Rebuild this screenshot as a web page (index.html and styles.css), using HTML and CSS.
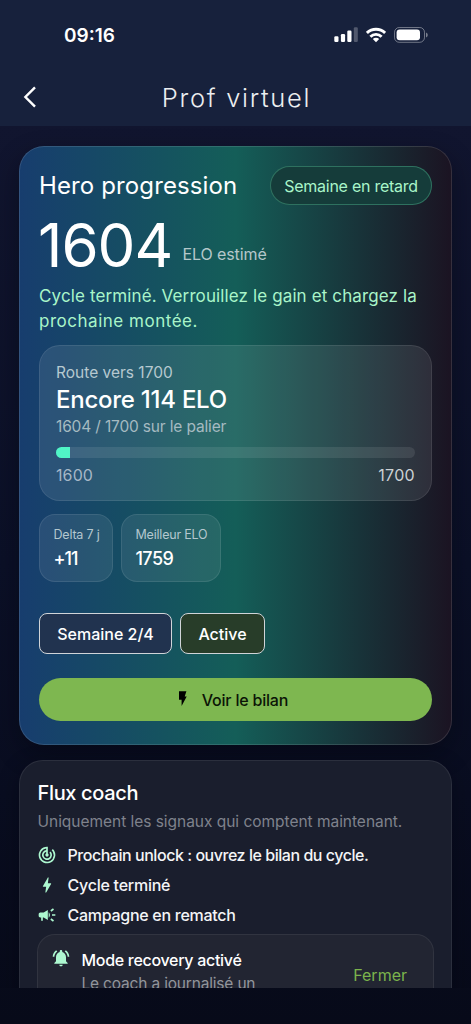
FILE: index.html
```html
<!DOCTYPE html>
<html lang="fr">
<head>
<meta charset="utf-8">
<title>Prof virtuel</title>
<link rel="stylesheet" href="styles.css">
</head>
<body>
<header class="header">
  <div class="status">
    <span class="time">09:16</span>
    <div class="indicators">
      <svg class="signal" viewBox="0 0 24 16" width="24" height="16"><g fill="#fff"><rect x="0.3" y="9.3" width="4.2" height="5.6" rx="1.2"/><rect x="6.9" y="7" width="4.2" height="7.9" rx="1.2"/><rect x="13.3" y="3.6" width="4.2" height="11.3" rx="1.2"/><rect x="19.8" y="0.3" width="4" height="14.6" rx="1.2" opacity=".25"/></g></svg>
      <svg class="wifi" viewBox="0 0 20 16" width="20" height="16"><g fill="none" stroke="#fff" stroke-width="2.9"><path d="M0.9 5.9a13.1 13.1 0 0 1 18.2 0"/><path d="M4.4 9.7a8 8 0 0 1 11.2 0"/></g><path d="M10 15.2L6.8 12a4.5 4.5 0 0 1 6.4 0z" fill="#fff"/></svg>
      <svg class="battery" viewBox="0 0 34 16" width="34" height="16"><rect x=".5" y=".5" width="30" height="14.8" rx="4.8" fill="none" stroke="#fff" stroke-opacity=".38"/><rect x="2.6" y="2.6" width="23.4" height="10.6" rx="3" fill="#fff"/><path d="M32 5.4q1.8.6 1.8 2.5T32 10.4z" fill="#fff" opacity=".42"/></svg>
    </div>
  </div>
  <nav class="nav">
    <svg class="back" viewBox="0 0 14 22" width="14" height="22"><path d="M12 1.4L2.4 11l9.6 9.6" fill="none" stroke="#fff" stroke-width="2.4"/></svg>
    <h1 class="nav-title">Prof virtuel</h1>
  </nav>
</header>

<main class="content">
  <section class="hero">
    <div class="hero-head">
      <h2 class="hero-title">Hero progression</h2>
      <span class="pill">Semaine en retard</span>
    </div>
    <div class="score">
      <strong class="score-value">1604</strong>
      <span class="score-label">ELO estimé</span>
    </div>
    <p class="hero-text">Cycle terminé. Verrouillez le gain et chargez la <span class="second-line">prochaine montée.</span></p>

    <div class="route">
      <div class="route-label">Route vers 1700</div>
      <div class="route-title">Encore 114 ELO</div>
      <div class="route-sub">1604 / 1700 sur le palier</div>
      <div class="bar"><div class="bar-fill"></div></div>
      <div class="bounds"><span class="bound-low">1600</span><span class="bound-high">1700</span></div>
    </div>

    <div class="tiles">
      <div class="tile delta"><span class="tile-label">Delta 7 j</span><span class="tile-value plus">+11</span></div>
      <div class="tile best"><span class="tile-label">Meilleur ELO</span><span class="tile-value">1759</span></div>
    </div>

    <div class="chips">
      <span class="chip week">Semaine 2/4</span>
      <span class="chip active">Active</span>
    </div>

    <button class="cta">
      <svg viewBox="0 0 10 18" width="10" height="18"><path d="M1 1.3h7.4L6.7 6.4h2L3.6 16V9.8H1z" fill="#000"/></svg>
      <span>Voir le bilan</span>
    </button>
  </section>

  <section class="flux">
    <h2 class="flux-title">Flux coach</h2>
    <p class="flux-sub">Uniquement les signaux qui comptent maintenant.</p>
    <ul class="signals">
      <li class="signal-row unlock">
        <svg viewBox="0 0 24 24" width="20" height="20"><path fill="currentColor" d="M19.07 4.93l-1.41 1.41A8 8 0 1 1 11 4.07v2.02A6 6 0 1 0 16.24 7.76l-1.41 1.41A4 4 0 1 1 11 8.14v2.14A2 2 0 1 0 14 12c0-.74-.4-1.38-1-1.72V2h-1a10 10 0 1 0 7.07 2.93z"/></svg>
        <span>Prochain unlock : ouvrez le bilan du cycle.</span>
      </li>
      <li class="signal-row cycle">
        <svg viewBox="0 0 24 24" width="20" height="20"><path fill="currentColor" d="M11 21h-1l1-7H7.5c-.88 0-.33-.75-.31-.78C8.48 10.94 10.42 7.54 13.01 3h1l-1 7h3.51c.4 0 .62.19.4.66C12.97 17.55 11 21 11 21z"/></svg>
        <span>Cycle terminé</span>
      </li>
      <li class="signal-row campaign">
        <svg viewBox="0 0 24 24" width="20" height="20"><path fill="currentColor" d="M18 11v2h4v-2h-4zM16 17.61c.96.71 2.21 1.65 3.2 2.39.4-.53.8-1.07 1.2-1.6-.99-.74-2.24-1.68-3.2-2.4-.4.54-.8 1.08-1.2 1.61zM20.4 5.6c-.4-.53-.8-1.07-1.2-1.6-.99.74-2.24 1.68-3.2 2.4.4.53.8 1.07 1.2 1.6.96-.72 2.21-1.65 3.2-2.4zM4 9c-1.1 0-2 .9-2 2v2c0 1.1.9 2 2 2h1v4h2v-4h1l5 3V6L8 9H4zM15.5 12c0-1.33-.58-2.53-1.5-3.35v6.69c.92-.81 1.5-2.01 1.5-3.34z"/></svg>
        <span>Campagne en rematch</span>
      </li>
    </ul>
    <div class="notice">
      <svg class="bell" viewBox="0 0 24 24" width="20" height="20"><path fill="currentColor" d="M7.58 4.08L6.15 2.65C3.75 4.48 2.17 7.3 2.03 10.5h2c.15-2.65 1.51-4.97 3.55-6.42zm12.39 6.42h2c-.15-3.2-1.73-6.02-4.12-7.85l-1.42 1.43c2.02 1.45 3.39 3.77 3.54 6.42zM18 11c0-3.07-1.64-5.64-4.5-6.32V4c0-.83-.67-1.5-1.5-1.5s-1.5.67-1.5 1.5v.68C7.63 5.36 6 7.92 6 11v5l-2 2v1h16v-1l-2-2v-5zm-6 11c1.1 0 2-.9 2-2h-4c0 1.1.9 2 2 2z"/></svg>
      <div class="notice-body">
        <div class="notice-title">Mode recovery activé</div>
        <div class="notice-text">Le coach a journalisé un</div>
      </div>
      <span class="close">Fermer</span>
    </div>
  </section>
</main>
</body>
</html>
```
FILE: styles.css
```css
* { box-sizing: border-box; }

body {
  margin: 0;
  height: 1024px;
  overflow: hidden;
  background: linear-gradient(180deg, #11152f 0%, #11152f 12%, #0b1027 55%, #070a19 100%);
  color: #fff;
  font-family: Inter, "Liberation Sans", sans-serif;
  font-size: 16px;
}

h1, h2, p, ul { margin: 0; padding: 0; font-weight: 400; }
ul { list-style: none; }
svg { display: block; flex: none; }
span, div, h1, h2 { white-space: nowrap; }

.header { height: 126px; background: #17213c; }

.status {
  height: 70px;
  padding: 0 43px 0 64px;
  display: flex;
  align-items: center;
  justify-content: space-between;
}
.time { font-size: 19px; font-weight: 600; }
.indicators { display: flex; align-items: center; }
.wifi { margin: 0 8px 0 8px; }

.nav {
  height: 54px;
  display: grid;
  grid-template-columns: 60px 1fr 60px;
  align-items: center;
}
.back { margin-left: 23px; }
.nav-title {
  padding-left: 2px;
  text-align: center;
  font-size: 25.5px;
  font-weight: 350;
  letter-spacing: 1.7px;
  color: #eceef0;
}

.content {
  height: 861.5px;
  overflow: hidden;
  padding: 20px 19px 0;
}

.hero {
  height: 599px;
  padding: 19px;
  border: 1px solid rgba(255, 255, 255, .12);
  border-radius: 25px;
  background: linear-gradient(90deg, #173d6e 0%, #145e58 50%, #1b1322 100%) border-box;
  box-shadow: 0 10px 24px rgba(5, 6, 16, .45);
}
.hero-head {
  height: 39px;
  display: flex;
  align-items: center;
  justify-content: space-between;
}
.hero-title { font-size: 24px; letter-spacing: .12px; }
.pill {
  width: 162px;
  height: 39px;
  line-height: 39px;
  border: 1px solid rgba(98, 218, 168, .34);
  border-radius: 20px;
  background: #153c3a;
  color: #a9f5c9;
  text-align: center;
  letter-spacing: -.26px;
}

.score { height: 79px; display: flex; align-items: flex-end; }
.score-value {
  width: 144.5px;
  margin-left: -1px;
  line-height: 78px;
  font-size: 60px;
  font-weight: 420;
  letter-spacing: -1px;
}
.score-label { margin-bottom: 20px; line-height: 20px; color: #b4c7ca; letter-spacing: -.1px; }

.hero-text {
  font-size: 17px;
  line-height: 24.5px;
  letter-spacing: .12px;
  color: #a9f5c9;
}
.second-line { display: block; letter-spacing: .52px; }

.route {
  height: 156px;
  margin-top: 12px;
  padding: 15.5px 16px;
  border: 1px solid rgba(255, 255, 255, .09);
  border-radius: 21px;
  background: rgba(255, 255, 255, .09);
}
.route-label { font-size: 15.5px; line-height: 22px; color: #b6c9d0; }
.route-title {
  font-size: 24px;
  font-weight: 450;
  line-height: 32px;
  letter-spacing: -.25px;
}
.route-sub { font-size: 15.5px; line-height: 22px; letter-spacing: -.16px; color: #a5bac1; }
.bar {
  height: 11px;
  margin-top: 9px;
  overflow: hidden;
  border-radius: 6px;
  background: rgba(255, 255, 255, .09);
}
.bar-fill { width: 14px; height: 11px; background: #50f5c6; }
.bounds {
  margin-top: 6.5px;
  line-height: 22px;
  display: flex;
  justify-content: space-between;
}
.bound-low { color: #a6b7c7; letter-spacing: .1px; }
.bound-high { color: #ccd1d4; letter-spacing: .3px; }

.tiles { margin-top: 13px; display: flex; gap: 8px; }
.tile {
  height: 68px;
  padding: 11.5px 13.5px;
  border: 1px solid rgba(255, 255, 255, .09);
  border-radius: 16px;
  background: rgba(255, 255, 255, .08);
  display: flex;
  flex-direction: column;
  gap: 4px;
}
.delta { width: 74px; }
.best { width: 100px; }
.tile-label { font-size: 12.5px; line-height: 16px; letter-spacing: -.2px; color: #b4c7cf; }
.tile-value { font-size: 18px; font-weight: 450; line-height: 24px; letter-spacing: -.6px; }
.plus { letter-spacing: -1px; }

.chips { margin-top: 30.5px; display: flex; gap: 8px; }
.chip {
  height: 41.5px;
  line-height: 40.5px;
  border: 1px solid #d0d4d8;
  border-radius: 8px;
  text-align: center;
  font-weight: 450;
}
.week { width: 133px; background: #21334f; }
.active { width: 85px; background: #283d29; }

.cta {
  width: 100%;
  height: 43px;
  margin-top: 24px;
  padding: 0 5px 0 0;
  border: 0;
  border-radius: 22px;
  background: #7eb750;
  color: #0b1406;
  display: flex;
  align-items: center;
  justify-content: center;
  gap: 14px;
  font: 450 16px/44px Inter, sans-serif;
  letter-spacing: -.2px;
}
.cta svg { margin-bottom: 2px; }

.flux {
  height: 300px;
  margin-top: 15px;
  padding: 18px 17.5px 0;
  border: 1px solid rgba(255, 255, 255, .08);
  border-radius: 24px;
  background: #1a1e2d;
  box-shadow: 0 6px 20px rgba(5, 6, 16, .4);
}
.flux-title { font-size: 20px; font-weight: 450; line-height: 28px; letter-spacing: -.35px; }
.flux-sub {
  margin-top: 3.5px;
  font-size: 15.5px;
  line-height: 22px;
  letter-spacing: -.03px;
  white-space: nowrap;
  color: #7f828c;
}
.signals { margin-top: 7.5px; }
.signal-row {
  height: 30px;
  display: flex;
  align-items: center;
  gap: 10.5px;
  font-weight: 450;
  color: #f4f5f7;
}
.signal-row svg, .bell { color: #adf8d0; }
.signal-row svg { margin-left: -.5px; }
.unlock { letter-spacing: -.46px; }
.cycle { letter-spacing: -.25px; }
.campaign { letter-spacing: -.28px; }

.notice {
  height: 120px;
  margin: 4px -.5px 0;
  padding: 12.5px 26px 0 14px;
  border: 1px solid rgba(255, 255, 255, .07);
  border-radius: 18px;
  background: #222532;
  display: flex;
  align-items: flex-start;
}
.bell { margin: 0 10.5px 0 -1px; }
.notice-body { flex: 1; line-height: 24px; }
.notice-title { font-weight: 450; letter-spacing: -.3px; }
.notice-text { font-size: 15.5px; letter-spacing: -.18px; color: #92959c; }
.close { margin-top: 15.5px; line-height: 24px; color: #7bb34c; }
```
